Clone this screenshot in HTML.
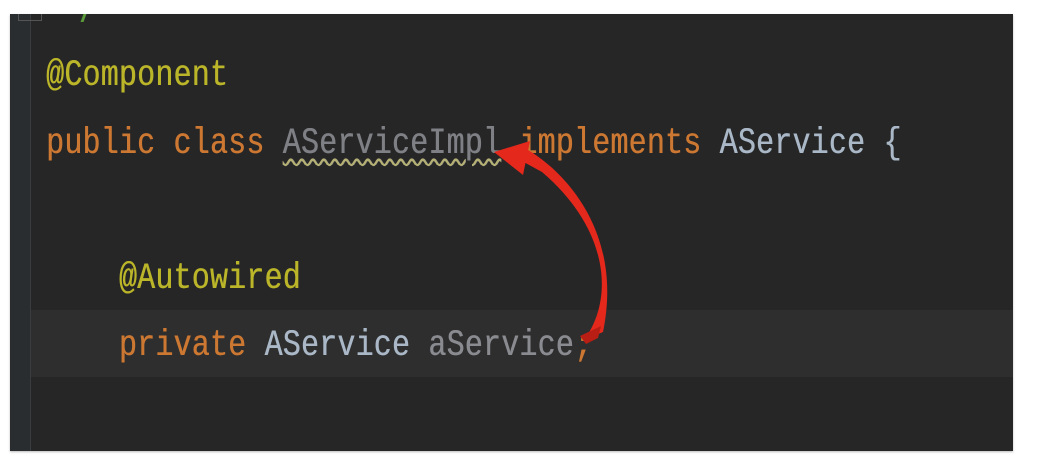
<!DOCTYPE html>
<html><head><style>
body{margin:0;width:1038px;height:467px;background:#fff;position:relative;overflow:hidden}
.panel{position:absolute;left:10px;top:14px;width:1003px;height:437px;background:#262626;box-shadow:0 1px 2px #bbb}
.gut{position:absolute;left:10px;top:14px;width:20px;height:437px;background:#2a2d30;border-right:1px solid #3a3d40}
.hl{position:absolute;left:31px;top:310px;width:982px;height:67px;background:#2e2e2e}
.l{position:absolute;left:46px;font-family:"Liberation Mono",monospace;font-size:30px;letter-spacing:0.2px;white-space:pre;transform:scaleY(1.22);transform-origin:0 100%;line-height:1;text-shadow:0.4px 0 0 currentColor}
.a{color:#bbb529}.k{color:#cc7832}.g{color:#7f8085}.c{color:#a9b7c6}.v{color:#8a8b90}
.w{text-decoration:underline wavy #b5b073;text-decoration-thickness:1.5px;text-underline-offset:4px}
</style></head><body>
<div class="panel"></div><div class="gut"></div><div class="hl"></div>
<div style="position:absolute;left:18px;top:14px;width:22px;height:6px;border:1px solid #555;border-top:none"></div>
<div style="position:absolute;left:82px;top:14px;width:3px;height:8px;background:#5a9a3a;transform:skewX(-20deg)"></div>
<div class="l" style="top:65px"><span class="a">@Component</span></div>
<div class="l" style="top:133px"><span class="k">public class </span><span class="g w">AServiceImpl</span> <span class="k">implements </span><span class="c">AService {</span></div>
<div class="l" style="top:268px">    <span class="a">@Autowired</span></div>
<div class="l" style="top:335px">    <span class="k">private </span><span class="c">AService </span><span class="v">aService</span><span class="k">;</span></div>
<svg width="1038" height="467" style="position:absolute;left:0;top:0">
<path d="M584 340 C614 300 610 230 542 172 L520 160 L528 150 C562 170 624 230 603 332 Z" fill="#e5281c"/>
<path d="M494 152 L530 141 L523 175 Z" fill="#e5281c"/>
<path d="M580 336 L601 326 L598 338 L586 344 Z" fill="#b81e14"/>
</svg>
</body></html>
